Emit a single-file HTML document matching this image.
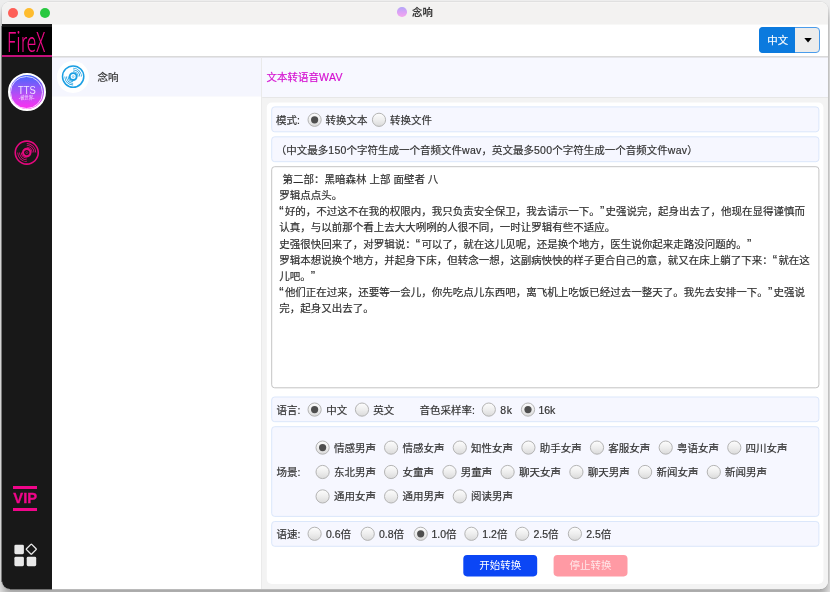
<!DOCTYPE html>
<html lang="zh-CN">
<head>
<meta charset="utf-8">
<title>念响</title>
<style>
*{box-sizing:border-box;margin:0;padding:0}
html,body{width:830px;height:592px;overflow:hidden}
body{position:relative;background:#ededed;font-family:"Liberation Sans","Noto Sans CJK SC",sans-serif;font-size:10.5px;color:#333;text-spacing-trim:space-all;-webkit-text-stroke:.18px}
.win{position:absolute;left:2px;top:2px;width:826px;height:587px;border-radius:8px;overflow:hidden;background:#fff;box-shadow:0 0 0 1px rgba(0,0,0,.05),0 8px 8px rgba(0,0,0,.3)}
.abs{position:absolute;left:-2px;top:-2px;width:830px;height:592px;will-change:transform}
.abs *{position:absolute}
.titlebar{left:0;top:0;width:830px;height:24px;background:#f3f2f1;border-top:3px solid #f6f5f4}
.tl{width:10px;height:10px;border-radius:50%;top:8px}
.title{top:6.4px;left:412px;font-weight:bold;font-size:10.4px;line-height:14px;color:#3a3a3a;white-space:nowrap;-webkit-text-stroke:0}
.ticon{left:397.3px;top:7.3px;width:9.7px;height:9.7px;border-radius:50%;background:linear-gradient(180deg,#b4a6f8 0%,#dca2f5 55%,#f4a8ee 100%)}
.sidebar{left:0;top:24px;width:52px;height:568px;background:#181818}
.logo{left:0;top:27px;width:52px;height:30px;background:#000}
.logotxt{left:6.8px;top:19.6px;font-family:"Noto Sans CJK SC","Liberation Sans",sans-serif;font-weight:300;font-size:27.3px;line-height:40px;color:#ee0a88;transform-origin:0 0;transform:scaleX(.635);white-space:nowrap}
.logoline{left:0;top:55px;width:52px;height:1.6px;background:#c4107a}
.topbar{left:52px;top:24px;width:778px;height:32px;background:#fff;border-top:1px solid #f8f8f7}
.topline{left:52px;top:56px;width:778px;height:2px;background:#dadada;border-bottom:1px solid #e5e5ea}
.list{left:52px;top:57px;width:209px;height:535px;background:#fff}
.item{left:52px;top:57px;width:209px;height:40px;background:#f5f6fe;border-bottom:1px solid #fafafd}
.vline{left:261px;top:57px;width:2px;height:535px;background:#eaeaea}
.rhead{left:262px;top:57px;width:568px;height:40px;background:#f7f8ff}
.rline{left:263px;top:97px;width:567px;height:1px;background:#e7e7e7}
.rbody{left:262px;top:98px;width:568px;height:494px;background:#f3f3f3}
.t{white-space:nowrap;line-height:14px;height:14px}
.ln{left:279.2px;white-space:nowrap;line-height:16px;height:16px;color:#2e2e2e}
.btn{top:555px;width:74px;height:21px;color:#fff;text-align:center;line-height:21.4px;white-space:nowrap;-webkit-text-stroke:0}
.tts{left:7.75px;top:73.2px;width:38px;height:38px;border-radius:50%;background:linear-gradient(180deg,#4668ff 0%,#8a58f8 35%,#c548f4 65%,#ff2ff0 100%);border:2px solid #fff}
.ttsring{left:10.4px;top:75.9px;width:32.7px;height:32.7px;border-radius:50%;border:.7px solid rgba(255,255,255,.75)}
.ttst{left:18px;top:83.5px;font-size:10.3px;line-height:13px;color:#f3e6ff;white-space:nowrap;transform:scaleX(.91);transform-origin:0 0;-webkit-text-stroke:0}
.ttss{left:16.7px;top:95px;width:20px;text-align:center;font-size:4.3px;line-height:5px;color:#f3e6ff;white-space:nowrap;-webkit-text-stroke:0}
.vipbar{left:12.8px;width:24.5px;height:3px;background:#f0068a}
.vip{left:13.2px;top:489.4px;font-size:14.8px;font-weight:bold;line-height:18px;color:#f0068a;white-space:nowrap;letter-spacing:.1px;-webkit-text-stroke:.3px #f0068a}
.icirc{left:57.3px;top:61.2px;width:31.6px;height:31.6px;border-radius:50%;background:#fff}
.dd{left:759px;top:27px;width:61px;height:25.5px;border-radius:4px;background:#ececec;border:1px solid #4a9ceb}
.ddl{left:759px;top:27px;width:36px;height:25.5px;border-radius:4px 0 0 4px;background:#0b7ade}
.q{position:static !important;display:inline-block;width:5.7px;font-size:13px;line-height:10px}
.edge{position:absolute;left:1px;top:26px;width:1px;height:556px;background:#7a7a7a}
.l{position:static !important;letter-spacing:.25px}
.edgeb{position:absolute;left:52px;top:589px;width:768px;height:1px;background:#bababa}
.edgec{position:absolute;left:10px;top:589px;width:42px;height:1px;background:#707070}
</style>
</head>
<body>
<div class="win"><div class="abs">
<div class="titlebar"></div>
<div class="tl" style="left:8px;background:#fe5f57"></div>
<div class="tl" style="left:24px;background:#febc2e"></div>
<div class="tl" style="left:40px;background:#28c840"></div>
<div class="ticon"></div>
<div class="title">念响</div>
<div class="sidebar"></div>
<div class="logo"></div>
<div class="logotxt">FireX</div>
<div class="logoline"></div>
<div class="topbar"></div>
<div class="list"></div><div class="item"></div><div class="vline"></div>
<div class="rhead"></div><div class="rline"></div><div class="rbody"></div><div class="topline"></div>
<svg style="left:262px;top:98px" width="566" height="490" viewBox="262 98 566 490"><rect x="266.8" y="102.6" width="556.6" height="481.3" rx="5" fill="#fff"/><rect x="271.7" y="106.9" width="547.2" height="24.9" rx="3" fill="#f6f7ff" stroke="#dbe7fb"/><rect x="271.7" y="136.8" width="547.2" height="24.9" rx="3" fill="#f6f7ff" stroke="#dbe7fb"/><rect x="271.7" y="397.0" width="547.2" height="24.7" rx="3" fill="#f6f7ff" stroke="#dbe7fb"/><rect x="271.7" y="426.7" width="547.2" height="89.7" rx="3" fill="#f6f7ff" stroke="#dbe7fb"/><rect x="271.7" y="521.5" width="547.2" height="24.8" rx="3" fill="#f6f7ff" stroke="#dbe7fb"/><rect x="271.7" y="166.7" width="547.2" height="221.1" rx="3" fill="#fff" stroke="#c4c4c4"/><rect x="463.3" y="555" width="73.9" height="21.4" rx="3.8" fill="#0b46f5"/><rect x="553.6" y="555" width="73.9" height="21.4" rx="3.8" fill="#ff9aa4"/></svg>
<div class="tts"></div><div class="ttsring"></div>
<div class="ttst">TTS</div><div class="ttss">-被世界-</div>
<svg class="" style="left:13px;top:139px" width="29" height="29" viewBox="0 0 29 29" fill="none" stroke="#e5087f"><g transform="translate(13.75 13.60)"><circle r="11.50" stroke-width="1.6"/><circle r="3.75" stroke-width="2.10"/><circle r="1.00" stroke-width="0.70" opacity=".8"/><path stroke="none" fill="#e5087f" d="M0 -5.88A5.88 5.88 0 0 1 5.88 0L5.03 0A5.03 5.03 0 0 0 0 -5.03Z"/><path stroke="none" fill="#e5087f" d="M0 5.88A5.88 5.88 0 0 1 -5.88 0L-5.03 0A5.03 5.03 0 0 0 0 5.03Z"/><path stroke="none" fill="#e5087f" d="M0 -7.67A7.67 7.67 0 0 1 7.67 0L6.83 0A6.83 6.83 0 0 0 0 -6.83Z"/><path stroke="none" fill="#e5087f" d="M0 7.67A7.67 7.67 0 0 1 -7.67 0L-6.83 0A6.83 6.83 0 0 0 0 6.83Z"/><path stroke="none" fill="#e5087f" d="M0 -9.48A9.48 9.48 0 0 1 9.48 0L8.62 0A8.62 8.62 0 0 0 0 -8.62Z"/><path stroke="none" fill="#e5087f" d="M0 9.48A9.48 9.48 0 0 1 -9.48 0L-8.62 0A8.62 8.62 0 0 0 0 8.62Z"/></g></svg>
<div class="vipbar" style="top:486px"></div><div class="vipbar" style="top:507.8px"></div><div class="vip">VIP</div>
<svg style="left:10px;top:540px" width="32" height="32" viewBox="10 540 32 32" fill="#e8e8e8"><rect x="14.4" y="544.65" width="9.5" height="9.5" rx="1.4"/><rect x="14.4" y="556.75" width="9.5" height="9.4" rx="1.4"/><rect x="26.7" y="556.75" width="9.5" height="9.4" rx="1.4"/><rect x="27.6" y="545.5" width="7.4" height="7.4" rx=".6" fill="none" stroke="#e8e8e8" stroke-width="1.35" transform="rotate(45 31.3 549.2)"/></svg>
<div class="icirc"></div>
<svg class="" style="left:60px;top:64px" width="27" height="27" viewBox="0 0 27 27" fill="none" stroke="#1b9fe3"><g transform="translate(13.15 12.60)"><circle r="10.65" stroke-width="1.5"/><circle r="3.48" stroke-width="1.95"/><circle r="0.93" stroke-width="0.65" opacity=".8"/><path stroke="none" fill="#1b9fe3" d="M0 -5.45A5.45 5.45 0 0 1 5.45 0L4.66 0A4.66 4.66 0 0 0 0 -4.66Z"/><path stroke="none" fill="#1b9fe3" d="M0 5.45A5.45 5.45 0 0 1 -5.45 0L-4.66 0A4.66 4.66 0 0 0 0 4.66Z"/><path stroke="none" fill="#1b9fe3" d="M0 -7.11A7.11 7.11 0 0 1 7.11 0L6.33 0A6.33 6.33 0 0 0 0 -6.33Z"/><path stroke="none" fill="#1b9fe3" d="M0 7.11A7.11 7.11 0 0 1 -7.11 0L-6.33 0A6.33 6.33 0 0 0 0 6.33Z"/><path stroke="none" fill="#1b9fe3" d="M0 -8.78A8.78 8.78 0 0 1 8.78 0L7.99 0A7.99 7.99 0 0 0 0 -7.99Z"/><path stroke="none" fill="#1b9fe3" d="M0 8.78A8.78 8.78 0 0 1 -8.78 0L-7.99 0A7.99 7.99 0 0 0 0 7.99Z"/></g></svg>
<span class="t" style="left:97.5px;top:69.7px;color:#333">念响</span>
<span class="t" style="left:266.6px;top:69.8px;color:#d40fd0">文本转语音<span class="l" style="letter-spacing:.35px">WAV</span></span>
<div class="dd"></div><div class="ddl"></div><svg style="left:800px;top:34px" width="16" height="12" viewBox="800 34 16 12"><path d="M804.3 38.1h7.5l-3.75 4.4z" fill="#000"/></svg>
<span class="t" style="left:767.3px;top:33.0px;color:#fff">中文</span>
<span class="t" style="left:276.0px;top:112.6px">模式:</span>
<span class="t" style="left:325.6px;top:112.8px">转换文本</span>
<span class="t" style="left:390.1px;top:112.8px">转换文件</span>
<span class="t" style="left:275.8px;top:142.6px">（中文最多<span class="l">150</span>个字符生成一个音频文件<span class="l">wav</span>，英文最多<span class="l">500</span>个字符生成一个音频文件<span class="l">wav</span>）</span>
<div class="ln" style="top:170.90px"><span class="l" style="letter-spacing:.5px">&nbsp;</span>第二部：黑暗森林 上部 面壁者 八</div>
<div class="ln" style="top:187.07px">罗辑点点头。</div>
<div class="ln" style="top:203.24px"><span class="q">“</span>好的，不过这不在我的权限内，我只负责安全保卫，我去请示一下。<span class="q">”</span>史强说完，起身出去了，他现在显得谨慎而</div>
<div class="ln" style="top:219.41px">认真，与以前那个看上去大大咧咧的人很不同，一时让罗辑有些不适应。</div>
<div class="ln" style="top:235.58px">史强很快回来了，对罗辑说：<span class="q">“</span>可以了，就在这儿见呢，还是换个地方，医生说你起来走路没问题的。<span class="q">”</span></div>
<div class="ln" style="top:251.75px">罗辑本想说换个地方，并起身下床，但转念一想，这副病怏怏的样子更合自己的意，就又在床上躺了下来：<span class="q">“</span>就在这</div>
<div class="ln" style="top:267.92px">儿吧。<span class="q">”</span></div>
<div class="ln" style="top:284.09px"><span class="q">“</span>他们正在过来，还要等一会儿，你先吃点儿东西吧，离飞机上吃饭已经过去一整天了。我先去安排一下。<span class="q">”</span>史强说</div>
<div class="ln" style="top:300.26px">完，起身又出去了。</div>
<span class="t" style="left:276.4px;top:402.6px">语言:</span>
<span class="t" style="left:326.2px;top:402.6px">中文</span>
<span class="t" style="left:373.3px;top:402.6px">英文</span>
<span class="t" style="left:419.4px;top:402.6px">音色采样率:</span>
<span class="t" style="left:500.2px;top:402.6px"><span class="l" style="letter-spacing:.6px">8k</span></span>
<span class="t" style="left:538.4px;top:402.6px">16k</span>
<span class="t" style="left:276.4px;top:465.0px">场景:</span>
<span class="t" style="left:333.9px;top:440.6px">情感男声</span>
<span class="t" style="left:402.4px;top:440.6px">情感女声</span>
<span class="t" style="left:471.1px;top:440.6px">知性女声</span>
<span class="t" style="left:539.7px;top:440.6px">助手女声</span>
<span class="t" style="left:608.3px;top:440.6px">客服女声</span>
<span class="t" style="left:677.0px;top:440.6px">粤语女声</span>
<span class="t" style="left:745.6px;top:440.6px">四川女声</span>
<span class="t" style="left:333.9px;top:465.0px">东北男声</span>
<span class="t" style="left:402.4px;top:465.0px">女童声</span>
<span class="t" style="left:460.8px;top:465.0px">男童声</span>
<span class="t" style="left:518.9px;top:465.0px">聊天女声</span>
<span class="t" style="left:587.7px;top:465.0px">聊天男声</span>
<span class="t" style="left:656.4px;top:465.0px">新闻女声</span>
<span class="t" style="left:725.1px;top:465.0px">新闻男声</span>
<span class="t" style="left:333.9px;top:489.4px">通用女声</span>
<span class="t" style="left:402.4px;top:489.4px">通用男声</span>
<span class="t" style="left:471.1px;top:489.4px">阅读男声</span>
<span class="t" style="left:276.4px;top:526.8px">语速:</span>
<span class="t" style="left:325.9px;top:526.8px">0.6倍</span>
<span class="t" style="left:379.0px;top:526.8px">0.8倍</span>
<span class="t" style="left:431.4px;top:526.8px">1.0倍</span>
<span class="t" style="left:482.3px;top:526.8px">1.2倍</span>
<span class="t" style="left:533.4px;top:526.8px">2.5倍</span>
<span class="t" style="left:586.2px;top:526.8px">2.5倍</span>
<svg style="left:262px;top:98px" width="566" height="490" viewBox="262 98 566 490"><defs><linearGradient id="rg" x1="0" y1="0" x2="0" y2="1"><stop offset="0" stop-color="#fdfdfd"/><stop offset=".5" stop-color="#eeeeee"/><stop offset="1" stop-color="#dadada"/></linearGradient></defs><circle cx="314.6" cy="119.8" r="6.6" fill="url(#rg)" stroke="#b4b4b4" stroke-width="1"/><circle cx="314.6" cy="119.8" r="3.6" fill="#4e4e4e"/><circle cx="379.0" cy="119.8" r="6.6" fill="url(#rg)" stroke="#b4b4b4" stroke-width="1"/><circle cx="314.6" cy="409.6" r="6.6" fill="url(#rg)" stroke="#b4b4b4" stroke-width="1"/><circle cx="314.6" cy="409.6" r="3.6" fill="#4e4e4e"/><circle cx="362.0" cy="409.6" r="6.6" fill="url(#rg)" stroke="#b4b4b4" stroke-width="1"/><circle cx="488.8" cy="409.6" r="6.6" fill="url(#rg)" stroke="#b4b4b4" stroke-width="1"/><circle cx="528.0" cy="409.6" r="6.6" fill="url(#rg)" stroke="#b4b4b4" stroke-width="1"/><circle cx="528.0" cy="409.6" r="3.6" fill="#4e4e4e"/><circle cx="322.6" cy="447.6" r="6.6" fill="url(#rg)" stroke="#b4b4b4" stroke-width="1"/><circle cx="322.6" cy="447.6" r="3.6" fill="#4e4e4e"/><circle cx="391.1" cy="447.6" r="6.6" fill="url(#rg)" stroke="#b4b4b4" stroke-width="1"/><circle cx="459.8" cy="447.6" r="6.6" fill="url(#rg)" stroke="#b4b4b4" stroke-width="1"/><circle cx="528.4" cy="447.6" r="6.6" fill="url(#rg)" stroke="#b4b4b4" stroke-width="1"/><circle cx="597.0" cy="447.6" r="6.6" fill="url(#rg)" stroke="#b4b4b4" stroke-width="1"/><circle cx="665.7" cy="447.6" r="6.6" fill="url(#rg)" stroke="#b4b4b4" stroke-width="1"/><circle cx="734.3" cy="447.6" r="6.6" fill="url(#rg)" stroke="#b4b4b4" stroke-width="1"/><circle cx="322.6" cy="472.0" r="6.6" fill="url(#rg)" stroke="#b4b4b4" stroke-width="1"/><circle cx="391.1" cy="472.0" r="6.6" fill="url(#rg)" stroke="#b4b4b4" stroke-width="1"/><circle cx="449.5" cy="472.0" r="6.6" fill="url(#rg)" stroke="#b4b4b4" stroke-width="1"/><circle cx="507.6" cy="472.0" r="6.6" fill="url(#rg)" stroke="#b4b4b4" stroke-width="1"/><circle cx="576.4" cy="472.0" r="6.6" fill="url(#rg)" stroke="#b4b4b4" stroke-width="1"/><circle cx="645.1" cy="472.0" r="6.6" fill="url(#rg)" stroke="#b4b4b4" stroke-width="1"/><circle cx="713.8" cy="472.0" r="6.6" fill="url(#rg)" stroke="#b4b4b4" stroke-width="1"/><circle cx="322.6" cy="496.4" r="6.6" fill="url(#rg)" stroke="#b4b4b4" stroke-width="1"/><circle cx="391.1" cy="496.4" r="6.6" fill="url(#rg)" stroke="#b4b4b4" stroke-width="1"/><circle cx="459.8" cy="496.4" r="6.6" fill="url(#rg)" stroke="#b4b4b4" stroke-width="1"/><circle cx="314.6" cy="533.8" r="6.6" fill="url(#rg)" stroke="#b4b4b4" stroke-width="1"/><circle cx="367.7" cy="533.8" r="6.6" fill="url(#rg)" stroke="#b4b4b4" stroke-width="1"/><circle cx="420.7" cy="533.8" r="6.6" fill="url(#rg)" stroke="#b4b4b4" stroke-width="1"/><circle cx="420.7" cy="533.8" r="3.6" fill="#4e4e4e"/><circle cx="471.4" cy="533.8" r="6.6" fill="url(#rg)" stroke="#b4b4b4" stroke-width="1"/><circle cx="522.2" cy="533.8" r="6.6" fill="url(#rg)" stroke="#b4b4b4" stroke-width="1"/><circle cx="574.9" cy="533.8" r="6.6" fill="url(#rg)" stroke="#b4b4b4" stroke-width="1"/></svg>
<div class="btn" style="left:463.3px">开始转换</div>
<div class="btn" style="left:553.6px;color:#ffe6e8">停止转换</div>
</div></div>
<div class="edge"></div><div class="edgeb"></div><div class="edgec"></div>
</body>
</html>
